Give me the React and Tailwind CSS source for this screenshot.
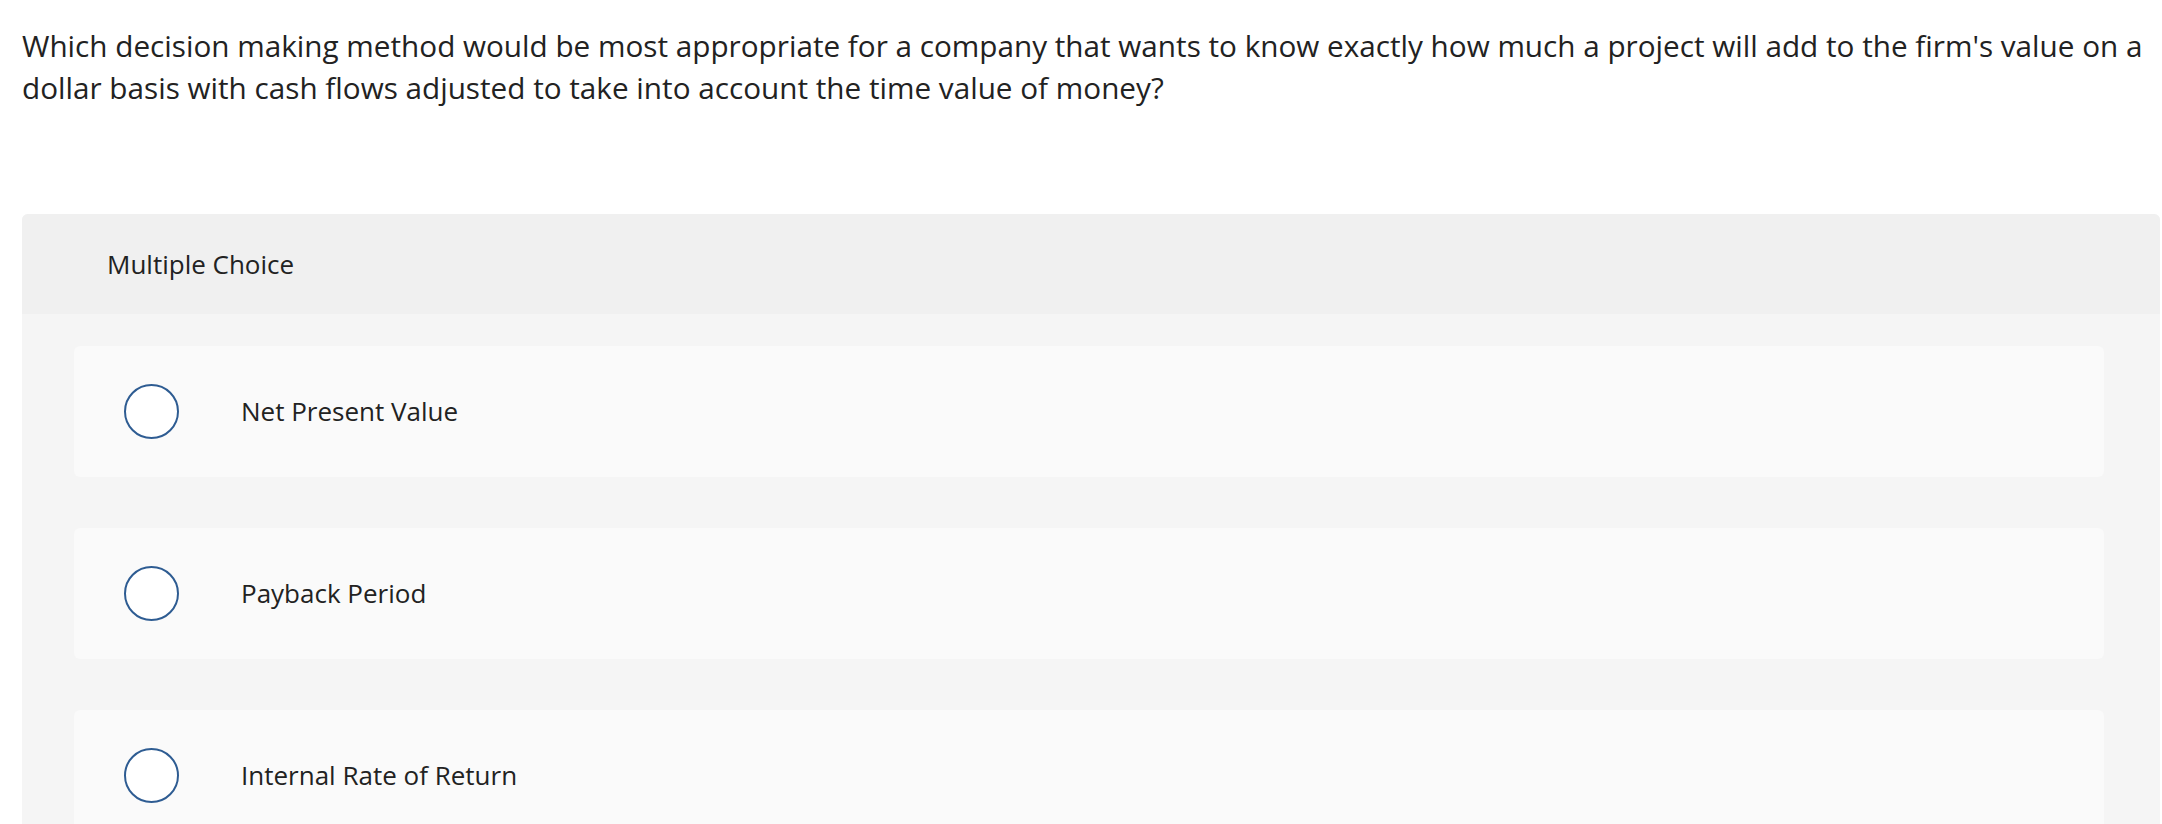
import React from "react";

const options = ["Net Present Value", "Payback Period", "Internal Rate of Return"];

function Option({ label }) {
  return (
    <div className="flex h-[131px] items-center rounded-md bg-[#fafafa] pl-[50px]">
      <span className="box-border h-[55px] w-[55px] shrink-0 rounded-full border-2 border-[#2e5c92] bg-white" />
      <span className="ml-[62px] text-[26px] text-[#222222]">{label}</span>
    </div>
  );
}

export default function App() {
  return (
    <div
      className="h-[824px] overflow-hidden bg-white text-[#222222]"
      style={{ fontFamily: '"Open Sans", "Noto Sans", sans-serif' }}
    >
      <p className="pl-[22px] pr-[8px] pt-[25px] text-[29.7px] leading-[42px]">
        Which decision making method would be most appropriate for a company that wants to know exactly how much a
        project will add to the firm's value on a dollar basis with cash flows adjusted to take into account the time
        value of money?
      </p>
      <div className="ml-[22px] mr-[2px] mt-[105px] rounded-t-md bg-[#f5f5f5]">
        <div className="flex h-[100px] items-center rounded-t-md bg-[#f0f0f0] pl-[85px] text-[26px]">
          Multiple Choice
        </div>
        <div className="ml-[52px] mr-[56px] flex flex-col gap-[51px] pt-[32px] pb-[40px]">
          {options.map((o) => (
            <Option key={o} label={o} />
          ))}
        </div>
      </div>
    </div>
  );
}
